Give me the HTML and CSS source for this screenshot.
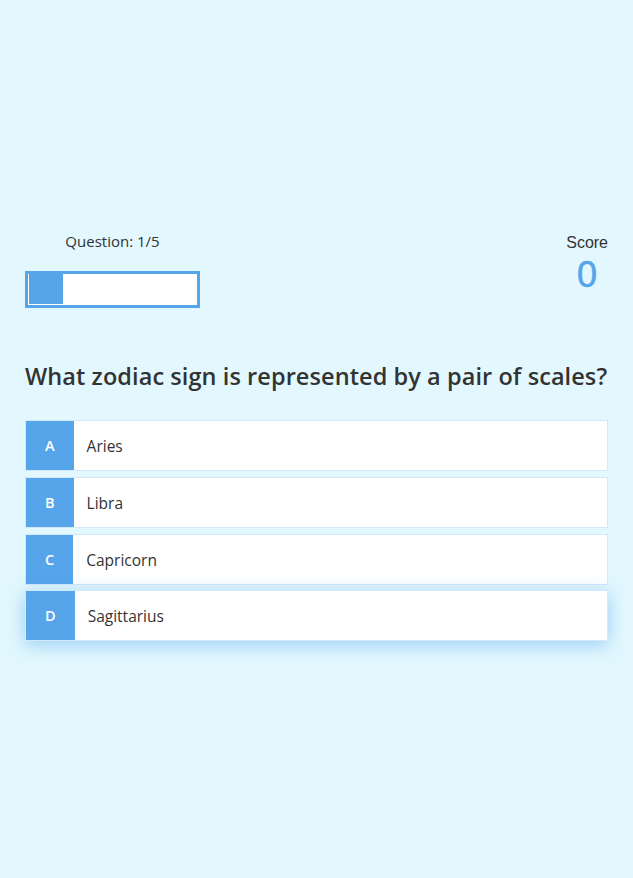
FILE: index.html
```html
<!DOCTYPE html>
<html lang="en">
<head>
<meta charset="utf-8">
<title>Quiz</title>
<link rel="stylesheet" href="styles.css">
</head>
<body>
<div class="container">
  <div class="game">
    <div class="hud">
      <div class="hud-item hud-progress">
        <p class="hud-prefix">Question: 1/5</p>
        <div class="progress-bar"><div class="progress-fill" style="width: 20%"></div></div>
      </div>
      <div class="hud-item hud-score">
        <p class="hud-prefix score-label">Score</p>
        <p class="hud-main-text">0</p>
      </div>
    </div>
    <h2 class="question">What zodiac sign is represented by a pair of scales?</h2>
    <div class="choice-container">
      <p class="choice-prefix">A</p>
      <p class="choice-text">Aries</p>
    </div>
    <div class="choice-container">
      <p class="choice-prefix">B</p>
      <p class="choice-text">Libra</p>
    </div>
    <div class="choice-container">
      <p class="choice-prefix">C</p>
      <p class="choice-text">Capricorn</p>
    </div>
    <div class="choice-container is-hover">
      <p class="choice-prefix">D</p>
      <p class="choice-text">Sagittarius</p>
    </div>
  </div>
</div>
</body>
</html>
```
FILE: styles.css
```css
* { box-sizing: border-box; }
html, body {
  margin: 0;
  padding: 0;
  background: #e2f8fe;
  color: #333;
  font-family: "Open Sans", "Noto Sans", sans-serif;
}
p { margin: 0; }
.container {
  height: 878px;
  padding: 0 25px 5px 25px;
  display: flex;
  flex-direction: column;
  justify-content: center;
}
.hud {
  display: flex;
  justify-content: space-between;
}
.hud-item {
  display: flex;
  flex-direction: column;
  align-items: center;
}
.hud-score {
  padding-top: 2px;
}
.hud-prefix {
  font-size: 15px;
  line-height: 20px;
  color: #333;
}
.hud-progress .hud-prefix {
  margin-bottom: 20px;
}
.score-label {
  font-family: "Liberation Sans", Arial, sans-serif;
  font-size: 16px;
}
.hud-main-text {
  margin-top: 2px;
  font-family: "Liberation Sans", Arial, sans-serif;
  font-size: 36px;
  line-height: 40px;
  color: #56a5eb;
  -webkit-text-stroke: 0.6px #56a5eb;
}
.progress-bar {
  width: 175px;
  height: 37px;
  border: 3px solid #56a5eb;
  background: #fff;
  padding: 0 0 1px 1px;
}
.progress-fill {
  height: 100%;
  background: #56a5eb;
}
.question {
  margin: 52px 0 28px;
  font-size: 23.5px;
  line-height: 32px;
  font-weight: 600;
  letter-spacing: 0.08px;
  white-space: nowrap;
  color: #333;
}
.choice-container {
  display: flex;
  height: 51px;
  margin-bottom: 6px;
  background: #fff;
  border: 1px solid #d3e8fa;
}
.choice-container:last-child { margin-bottom: 0; }
.choice-prefix {
  display: flex;
  align-items: center;
  padding: 0 19px;
  background: #56a5eb;
  color: #fff;
  font-size: 14.5px;
  font-weight: 600;
}
.choice-text {
  display: flex;
  align-items: center;
  padding: 0 13px;
  font-size: 15.5px;
  color: #333;
}
.is-hover {
  box-shadow: 0 4px 18px 0 rgba(86, 165, 235, 0.5);
  transform: translateY(-1px);
}
```
